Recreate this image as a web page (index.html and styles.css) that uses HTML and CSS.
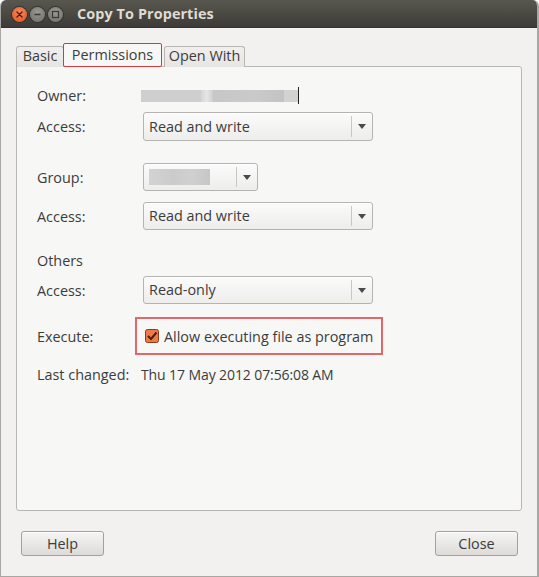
FILE: index.html
```html
<!DOCTYPE html>
<html>
<head>
<meta charset="utf-8">
<link rel="stylesheet" href="styles.css">
</head>
<body>
<div class="window">
  <div class="titlebar">
    <div class="wbtns">
      <span class="wbtn close"><svg width="15" height="15" viewBox="0 0 15 15"><path d="M5 5 L10 10 M10 5 L5 10" stroke="#5a1a08" stroke-width="1.4" stroke-linecap="round"/></svg></span>
      <span class="wbtn"><svg width="15" height="15" viewBox="0 0 15 15"><path d="M4.5 7.5 H10.5" stroke="#3a3935" stroke-width="1.6"/></svg></span>
      <span class="wbtn"><svg width="15" height="15" viewBox="0 0 15 15"><rect x="4.5" y="4.5" width="6" height="6" fill="none" stroke="#3a3935" stroke-width="1.2"/></svg></span>
    </div>
    <div class="title">Copy To Properties</div>
  </div>
  <div class="content">
    <div class="notebook">
      <div class="tabs">
        <div class="tab tab-basic">Basic</div>
        <div class="tab tab-active">Permissions</div>
        <div class="tab tab-open">Open With</div>
      </div>
      <div class="panel">
        <div class="row r-owner">
          <div class="label">Owner:</div>
          <div class="owner-val">
            <span class="blur b1"></span><span class="blur b2"></span><span class="blur b3"></span><span class="blur b4"></span><span class="cursor"></span>
          </div>
        </div>
        <div class="row r-access1">
          <div class="label">Access:</div>
          <div class="combo wide"><span class="ctext">Read and write</span><span class="carrow"><svg width="8" height="5" viewBox="0 0 8 5"><path d="M0 0 H8 L4 5 Z" fill="#4a4a4a"/></svg></span></div>
        </div>
        <div class="row r-group">
          <div class="label">Group:</div>
          <div class="combo narrow"><span class="ctext"><span class="gblur"></span></span><span class="carrow"><svg width="8" height="5" viewBox="0 0 8 5"><path d="M0 0 H8 L4 5 Z" fill="#4a4a4a"/></svg></span></div>
        </div>
        <div class="row r-access2">
          <div class="label">Access:</div>
          <div class="combo wide"><span class="ctext">Read and write</span><span class="carrow"><svg width="8" height="5" viewBox="0 0 8 5"><path d="M0 0 H8 L4 5 Z" fill="#4a4a4a"/></svg></span></div>
        </div>
        <div class="row r-others">
          <div class="label">Others</div>
        </div>
        <div class="row r-access3">
          <div class="label">Access:</div>
          <div class="combo wide"><span class="ctext">Read-only</span><span class="carrow"><svg width="8" height="5" viewBox="0 0 8 5"><path d="M0 0 H8 L4 5 Z" fill="#4a4a4a"/></svg></span></div>
        </div>
        <div class="row r-exec">
          <div class="label">Execute:</div>
          <label class="check">
            <svg class="cbox" width="14" height="14" viewBox="0 0 14 14">
              <rect x="0.5" y="0.5" width="13" height="13" rx="2" fill="#ee7a47" stroke="#8a3a16"/>
              <path d="M3 7 L6 10 L11.5 3.5" fill="none" stroke="#4a1f0c" stroke-width="2"/>
            </svg>
            <span>Allow executing file as program</span>
          </label>
        </div>
        <div class="row r-last">
          <div class="label">Last changed:</div>
          <div class="lastval">Thu 17 May 2012 07:56:08 AM</div>
        </div>
      </div>
    </div>
    <div class="actions">
      <button class="btn">Help</button>
      <button class="btn">Close</button>
    </div>
  </div>
</div>
</body>
</html>
```

FILE: styles.css
```css
html, body {
  margin: 0;
  padding: 0;
  background: #ffffff;
}
body {
  font-family: "Open Sans", "DejaVu Sans", sans-serif;
  font-size: 14.4px;
  color: #3c3c3c;
}
.window {
  width: 539px;
  height: 577px;
  box-sizing: border-box;
  display: flex;
  flex-direction: column;
  background: #f2f1f0;
  border-left: 1px solid #a9a7a3;
  border-right: 2px solid #a9a7a3;
  border-bottom: 1px solid #a9a7a3;
  border-radius: 6px 6px 0 0;
  overflow: hidden;
}
.titlebar {
  height: 28px;
  flex: none;
  display: flex;
  align-items: center;
  background: linear-gradient(#58574f, #3c3b37);
  border-bottom: 1px solid #33322e;
  box-sizing: border-box;
}
.wbtns {
  display: flex;
  gap: 3px;
  margin-left: 11px;
  margin-top: 2px;
}
.wbtn {
  width: 15px;
  height: 15px;
  border-radius: 50%;
  background: radial-gradient(circle at 50% 35%, #9a9892, #6e6c67);
  display: flex;
  box-shadow: 0 0 0 1px #34332f;
}
.wbtn.close {
  background: radial-gradient(circle at 50% 35%, #f58a5e, #e0501f);
}
.title {
  margin-left: 14px;
  font-weight: bold;
  font-size: 14.4px;
  color: #dfdbd2;
  letter-spacing: 0.1px;
}
.content {
  flex: 1;
  display: flex;
  flex-direction: column;
  padding: 15px 15px 20px 15px;
}
.notebook {
  flex: 1;
  display: flex;
  flex-direction: column;
}
.tabs {
  display: flex;
  align-items: flex-end;
  height: 24px;
  position: relative;
  z-index: 1;
  margin-bottom: -1px;
}
.tab {
  box-sizing: border-box;
  height: 21px;
  border: 1px solid #b9b7b2;
  border-bottom: none;
  border-radius: 3px 3px 0 0;
  background: linear-gradient(#f0efed, #e6e5e2);
  display: flex;
  align-items: center;
  justify-content: center;
  font-size: 14.4px;
  padding-bottom: 3px;
}
.tab-basic {
  width: 48px;
}
.tab-active {
  width: 99px;
  height: 24px;
  margin-left: -1px;
  background: #f7f7f6;
  border: 1px solid #d23a3f;
  border-bottom: 1px solid #d23a3f;
  border-radius: 2px;
  padding-bottom: 2px;
}
.tab-open {
  width: 81px;
  margin-left: 2px;
}
.panel {
  flex: 1;
  background: #f7f7f6;
  border: 1px solid #b9b7b2;
  border-radius: 0 3px 3px 3px;
  padding: 18px 20px 0 20px;
  display: flex;
  flex-direction: column;
}
.row {
  display: flex;
  align-items: center;
  height: 20px;
  flex: none;
}
.label {
  width: 106px;
  flex: none;
}
.r-access1 { margin-top: 7px; height: 29px; }
.r-group { margin-top: 22px; height: 28px; }
.r-access2 { margin-top: 11px; height: 28px; }
.r-others { margin-top: 20px; }
.r-access3 { margin-top: 6px; height: 28px; }
.r-exec { margin-top: 22px; }
.r-last { margin-top: 18px; }

.owner-val {
  display: flex;
  align-items: center;
  height: 18px;
  margin-left: -2px;
  margin-top: 1px;
}
.blur {
  height: 12px;
  display: block;
}
.b1 { width: 60px; background: #cfcfcf; }
.b2 { width: 12px; background: linear-gradient(90deg, #d6d6d6, #e6e6e6, #cdcdcd); }
.b3 { width: 71px; background: linear-gradient(90deg, #c7c7c7, #cacaca 60%, #c3c3c3); }
.b4 { width: 14px; background: #d2d2d2; }
.cursor {
  width: 1px;
  height: 17px;
  background: #222;
}

.combo {
  box-sizing: border-box;
  height: 100%;
  display: flex;
  align-items: stretch;
  border: 1px solid #b6b4b0;
  border-radius: 3px;
  background: linear-gradient(#fbfbfb, #ededec);
  box-shadow: inset 0 1px 0 #ffffff;
}
.combo.wide { width: 230px; }
.combo.narrow { width: 115px; }
.ctext {
  flex: 1;
  display: flex;
  align-items: center;
  padding-left: 5px;
  padding-bottom: 1px;
}
.carrow {
  width: 20px;
  display: flex;
  align-items: center;
  justify-content: center;
  margin: 3px 0;
  border-left: 1px solid #c9c7c3;
}
.gblur {
  display: block;
  width: 61px;
  height: 16px;
  background: linear-gradient(90deg, #d3d3d3, #cbcbcb 40%, #d0d0d0 70%, #c6c6c6);
}

.check {
  display: flex;
  align-items: center;
  gap: 5px;
  margin-left: 2px;
  outline: 2px solid #e0686a;
  outline-offset: 8px;
  height: 18px;
}
.cbox { flex: none; }
.lastval {
  margin-left: -2px;
  font-size: 14px;
  letter-spacing: -0.1px;
}

.actions {
  flex: none;
  display: flex;
  justify-content: space-between;
  padding: 20px 4px 0 5px;
}
.btn {
  width: 83px;
  height: 25px;
  border: 1px solid #a3a19d;
  border-radius: 3px;
  background: linear-gradient(#f5f5f4, #dcdbd8);
  font-family: "Open Sans", "DejaVu Sans", sans-serif;
  font-size: 14.4px;
  color: #3c3c3c;
  padding: 0;
  box-shadow: inset 0 1px 0 #fff;
}
```
